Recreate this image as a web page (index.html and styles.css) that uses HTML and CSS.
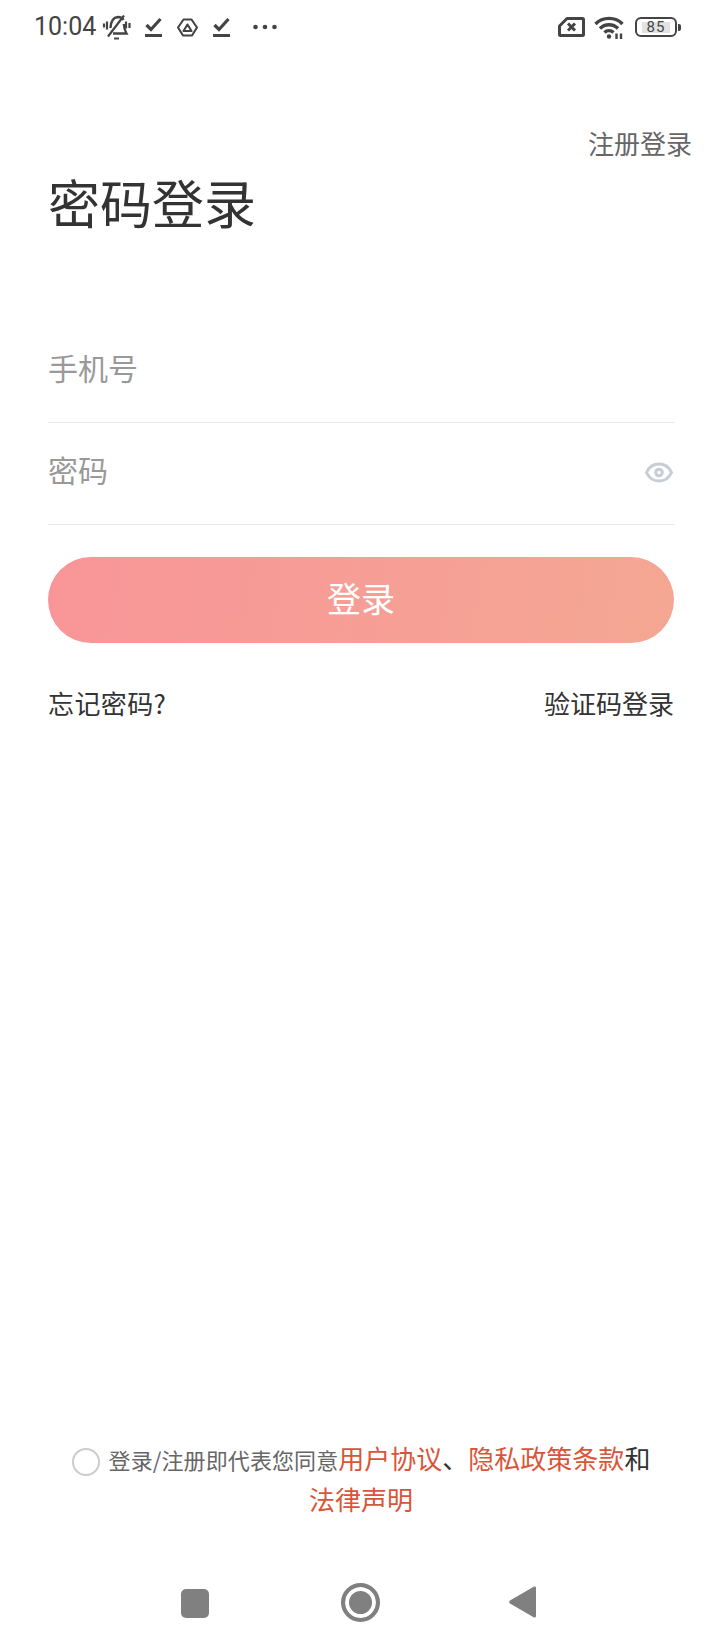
FILE: index.html
```html
<!DOCTYPE html>
<html lang="zh-CN">
<head>
<meta charset="utf-8">
<title>密码登录</title>
<link rel="stylesheet" href="styles.css">
</head>
<body>
<div class="page">
  <header class="status">
    <div class="status-left">
      <span class="time">10:04</span>
      <svg class="ic-bell" width="29" height="25" viewBox="0 0 29 25" fill="none" stroke="#444" stroke-width="2.400"><path d="M8.500 13c.2-5 2-10.500 7.500-11 2.500 0 4.500 1 5.500 3"/><path d="M21.800 9c.2 3.500.8 6 2.700 9.500H11"/><path d="M22 .5 6 21.500" stroke-width="2.200"/><path d="M12 23.500h5" stroke-width="2"/><path d="M5 6.500v8M2 8.500v4M24 6.500v7M27.500 8v5" stroke-width="2.200"/></svg>
      <svg class="ic-check" width="17" height="20" viewBox="0 0 17 20" fill="none" stroke="#444"><path d="M1.500 8 6 12.500 15.500 2" stroke-width="3.200"/><path d="M0 18.500h17" stroke-width="3"/></svg>
      <svg class="ic-hex" width="21" height="19" viewBox="0 0 21 19" fill="none" stroke="#444" stroke-width="2.100"><path d="M6.500 1.500h8L20 9.500 15 17.500H6L1 9.500z" stroke-linejoin="round"/><path d="M10.500 6.500 14.500 13H6.500z" stroke-linejoin="round"/></svg>
      <svg class="ic-check ic-check2" width="17" height="20" viewBox="0 0 17 20" fill="none" stroke="#444"><path d="M1.500 8 6 12.500 15.500 2" stroke-width="3.200"/><path d="M0 18.500h17" stroke-width="3"/></svg>
      <svg class="ic-dots" width="24" height="6" viewBox="0 0 24 6" fill="#444"><circle cx="2.500" cy="3" r="2.300"/><circle cx="12" cy="3" r="2.300"/><circle cx="21.500" cy="3" r="2.300"/></svg>
    </div>
    <div class="status-right">
      <svg class="ic-sim" width="27" height="20" viewBox="0 0 27 20" fill="none" stroke="#444"><path d="M9 1.500h15.500a1 1 0 0 1 1 1v15a1 1 0 0 1-1 1h-22a1 1 0 0 1-1-1V9z" stroke-width="3" stroke-linejoin="round"/><path d="M10 6.500l7 7M17 6.500l-7 7" stroke-width="3"/></svg>
      <svg class="ic-wifi" width="30" height="24" viewBox="0 0 30 24" fill="none" stroke="#444" stroke-width="3.400"><path d="M1.500 9C8.500 1.500 21.500 1.500 28.500 9"/><path d="M6 13.500c5-5 13-5 18 0"/><path d="M10.500 17.500c2.500-2.500 6.500-2.500 9 0"/><circle cx="15" cy="21.500" r="2.200" fill="#444" stroke="none"/><path d="M22.500 18.500v5.500M27 18.500v5.500" stroke-width="2.400"/></svg>
      <div class="battery">
        <div class="battery-body"><span class="battery-level">85</span></div>
        <div class="battery-nub"></div>
      </div>
    </div>
  </header>

  <a class="register">注册登录</a>

  <main class="content">
    <h1 class="title">密码登录</h1>
    <div class="field field-phone"><span class="placeholder">手机号</span></div>
    <div class="field">
      <span class="placeholder">密码</span>
      <svg class="eye" width="28" height="21" viewBox="0 0 28 21" fill="none" stroke="#c8ccd4" stroke-width="3"><path d="M1.500 10.500C4 5 8.500 2 14 2s10 3 12.500 8.500C24 16 19.500 19 14 19S4 16 1.500 10.500z"/><circle cx="14" cy="10.500" r="3.300"/></svg>
    </div>
    <button class="login">登录</button>
    <div class="links">
      <a class="forgot">忘记密码?</a>
      <a>验证码登录</a>
    </div>
  </main>

  <footer class="agreement">
    <span class="radio"></span><span class="muted">登录/注册即代表您同意</span><a class="red">用户协议</a><span class="dark">、</span><a class="red">隐私政策条款</a><span class="dark">和</span><br><a class="red">法律声明</a>
  </footer>

  <nav class="navbar">
    <span class="nav-square"></span>
    <span class="nav-circle"></span>
    <svg class="nav-back" width="27" height="34" viewBox="0 0 28 34" preserveAspectRatio="none"><path d="M26 1.500a1.500 1.500 0 0 1 2 1.500v28a1.500 1.500 0 0 1-2 1.500L1 18.500a1.800 1.800 0 0 1 0-3z" fill="#808080"/></svg>
  </nav>
</div>
</body>
</html>
```

FILE: styles.css
```css
* { box-sizing: border-box; }
html, body { margin: 0; padding: 0; background: #fff; }
body { font-family: "Noto Sans CJK SC", "Noto Sans", sans-serif; color: #333; }
.page { width: 720px; height: 1650px; display: flex; flex-direction: column; overflow: hidden; }

.status { height: 54px; flex: none; display: flex; justify-content: space-between; align-items: center; padding: 0 39px 0 34px; }
.status-left, .status-right { display: flex; align-items: center; }
.time { font-family: Roboto, sans-serif; font-size: 25px; color: #444; width: 62px; line-height: 30px; }
.ic-bell { margin-left: 6px; }
.ic-check { margin-left: 14px; }
.ic-hex { margin-left: 15px; }
.ic-check2 { margin-left: 15px; }
.ic-dots { margin-left: 23px; }
.ic-wifi { margin: 0 11px 0 9px; }
.battery { display: flex; align-items: center; }
.battery-body { width: 42px; height: 20px; border: 2px solid #444; border-radius: 6px; display: flex; align-items: center; justify-content: center; }
.battery-level { font-family: Roboto, sans-serif; font-size: 15px; line-height: 11px; color: #444; background: #e2e2e2; padding: 0 5px; letter-spacing: 1px; }
.battery-nub { width: 3px; height: 7px; margin-left: 1px; background: #444; border-radius: 0 2px 2px 0; }

.register { align-self: flex-end; margin: 71px 28px 0 0; font-size: 26px; line-height: 36px; color: #666; }

.content { padding: 0 46px 0 48px; display: flex; flex-direction: column; }
.title { margin: 11px 0 0; font-size: 52px; line-height: 60px; font-weight: 400; color: #333; }
.field { height: 102px; border-bottom: 1px solid #e6e6e6; display: flex; align-items: center; justify-content: space-between; padding: 0 1px 10px 0; }
.field-phone { margin-top: 89px; }
.placeholder { font-size: 30px; line-height: 40px; color: #999; }
.eye { flex: none; margin-top: 8px; }
.login { margin-top: 32px; height: 86px; border: 0; padding: 0 0 5px; border-radius: 43px; background: linear-gradient(100deg, #f99598 0%, #f4a793 100%); color: #fff; font: inherit; font-size: 34px; }
.links { margin-top: 42px; display: flex; justify-content: space-between; font-size: 26px; line-height: 36px; color: #333; }
.forgot { letter-spacing: .4px; }

.agreement { margin-top: auto; padding-left: 2px; text-align: center; font-size: 26px; line-height: 39px; width: 720px; }
.radio { display: inline-block; width: 28px; height: 28px; border: 2px solid #ccc; border-radius: 50%; margin-right: 9px; vertical-align: -7px; }
.muted { font-size: 22px; color: #666; letter-spacing: .1px; }
.red { color: #d9553a; }
.dark { color: #333; }

.navbar { flex: none; height: 132px; padding: 67px 3px 0 0; display: flex; justify-content: center; align-items: flex-start; }
.nav-square { width: 28px; height: 29px; margin-top: 4px; background: #808080; border-radius: 5px; }
.nav-circle { width: 39px; height: 39px; margin: -2px 0 0 132px; border-radius: 50%; border: 4px solid #808080; background: #808080; box-shadow: inset 0 0 0 4px #fff; }
.nav-back { margin: 0 0 0 129px; }
```
